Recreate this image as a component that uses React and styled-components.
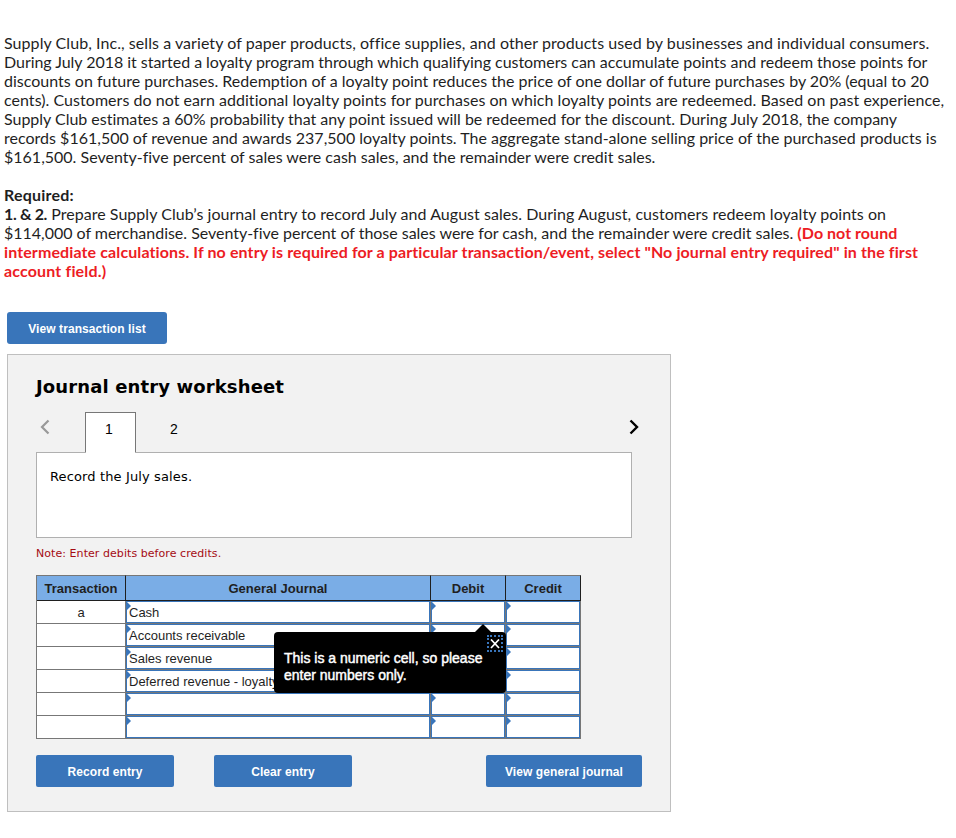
import { useState } from "react";
import styled, { createGlobalStyle } from "styled-components";

const GlobalStyle = createGlobalStyle`
  * {
    box-sizing: border-box;
  }
  body {
    margin: 0;
    background: #fff;
    color: #1f1f1f;
    font-family: "Liberation Sans", Arial, sans-serif;
  }
`;

const Page = styled.main`
  width: 956px;
  height: 838px;
  padding-top: 33px;
  overflow: hidden;
`;

const Problem = styled.section`
  padding-left: 4px;
  font-family: Lato, sans-serif;
  font-size: 16px;
  line-height: 19px;
`;

const Paragraph = styled.p`
  margin: 0 0 19px;
`;

const Line = styled.span`
  display: block;
  height: 19px;
  white-space: nowrap;
  letter-spacing: ${({ $spacing }) => $spacing || 0}px;
`;

const Strong = styled.b`
  letter-spacing: ${({ $spacing }) => $spacing || 0}px;
  color: ${({ $warn }) => ($warn ? "#ed1c24" : "inherit")};
`;

const Button = styled.button`
  width: ${({ $width }) => $width}px;
  height: 32px;
  padding: 1px 0 0;
  border: 0;
  border-radius: ${({ $radius }) => $radius || 2}px;
  background: #3975ba;
  color: #fff;
  font-family: "Liberation Sans", Arial, sans-serif;
  font-size: 12px;
  font-weight: 700;
  line-height: 16px;
  letter-spacing: 0.08px;
  cursor: pointer;
`;

const Toolbar = styled.div`
  padding: 13px 7px 10px;
  display: flex;
`;

const Panel = styled.section`
  width: 664px;
  height: 458px;
  margin-left: 7px;
  padding: 20px 28px 0;
  border: 1px solid #bfbfbf;
  background: #f2f2f2;
`;

const Title = styled.h2`
  margin: 0;
  height: 24px;
  line-height: 24px;
  font-family: "DejaVu Sans", Verdana, sans-serif;
  font-size: 18px;
  font-weight: 700;
  letter-spacing: 0.13px;
  color: #000;
`;

const Tabs = styled.div`
  display: flex;
  height: 40px;
  width: 606px;
  margin-top: 13px;
`;

const Arrow = styled.button`
  display: flex;
  width: 49px;
  height: 30px;
  padding: 7px 0 0 4px;
  border: 0;
  background: none;
  color: ${({ $muted }) => ($muted ? "#999" : "#000")};
`;

const NextArrow = styled(Arrow)`
  width: 13px;
  padding-left: 0;
  margin-left: auto;
`;

const Tab = styled.button`
  width: 51px;
  height: 40px;
  padding: 0 3px 7px 0;
  border: 1px solid ${({ $active }) => ($active ? "#777" : "transparent")};
  border-bottom: 0;
  background: ${({ $active }) => ($active ? "#fff" : "transparent")};
  color: #000;
  font-family: "Liberation Sans", Arial, sans-serif;
  font-size: 14px;
  margin-right: 14px;
`;

const Sheet = styled.div`
  position: relative;
  width: 596px;
  height: 86px;
  padding: 15px 13px;
  border: 1px solid #b0b0b0;
  background: #fff;
  font-family: "DejaVu Sans", Verdana, sans-serif;
  font-size: 13px;
  line-height: 18px;
  letter-spacing: 0.13px;
  color: #000;

  // opens the top edge below the active tab
  &::before {
    content: "";
    position: absolute;
    top: -1px;
    left: 49px;
    width: 49px;
    height: 1px;
    background: #fff;
  }
`;

const Note = styled.p`
  margin: 7px 0 14px;
  height: 16px;
  line-height: 17px;
  font-family: "DejaVu Sans", Verdana, sans-serif;
  font-size: 11px;
  letter-spacing: 0.06px;
  color: #a50b12;
`;

const Table = styled.div`
  display: grid;
  grid-template-columns: 89px 305px 75px 75px;
  width: 545px;
  border-left: 1px solid #777;
`;

const HeadCell = styled.div`
  height: 26px;
  padding-top: 1px;
  border-top: 1px solid #777;
  border-right: 1px solid #1f1f1f;
  border-bottom: 1px solid #1f1f1f;
  background: #7aade6;
  font-size: 13px;
  font-weight: 700;
  line-height: 24px;
  text-align: center;
`;

const Cell = styled.div`
  height: 23px;
  border-right: 1px solid #777;
  border-bottom: 1px solid #777;
  background: #fff;
  font-size: 13px;
  line-height: 23px;
  text-align: center;
`;

const Field = styled.div`
  position: relative;
  height: 22px;
  padding-left: 2px;
  border: 1px solid #3975ba;
  line-height: 21px;
  text-align: left;
  white-space: nowrap;
  overflow: hidden;

  &::before {
    content: "";
    position: absolute;
    left: 0;
    top: 0;
    border: solid transparent;
    border-width: 4px 0 4px 4px;
    border-left-color: #3975ba;
  }
`;

const Anchor = styled.div`
  position: relative;
`;

const Tooltip = styled.div`
  position: absolute;
  left: 238px;
  top: 57px;
  width: 232px;
  height: 61px;
  padding: 18px 10px 0;
  border-radius: 4px;
  background: #000;
  color: #fff;
  font-size: 14px;
  line-height: 17px;
  -webkit-text-stroke: 0.45px #fff;
  white-space: pre-line;

  &::before {
    content: "";
    position: absolute;
    left: 201px;
    top: -8px;
    border: solid transparent;
    border-width: 0 8px 8px;
    border-bottom-color: #000;
  }
`;

const Close = styled.button`
  position: absolute;
  top: 3px;
  left: 213px;
  display: flex;
  width: 16px;
  height: 17px;
  padding: 2px 1px;
  border: 2px dotted #3975ba;
  background: none;
  color: #fff;
`;

const Actions = styled.div`
  display: flex;
  width: 606px;
  margin-top: 16px;
  gap: 40px;

  & > :last-child {
    margin-left: auto;
  }
`;

const intro = [
  [0.064, "Supply Club, Inc., sells a variety of paper products, office supplies, and other products used by businesses and individual consumers."],
  [-0.038, "During July 2018 it started a loyalty program through which qualifying customers can accumulate points and redeem those points for"],
  [0.004, "discounts on future purchases. Redemption of a loyalty point reduces the price of one dollar of future purchases by 20% (equal to 20"],
  [0.038, "cents). Customers do not earn additional loyalty points for purchases on which loyalty points are redeemed. Based on past experience,"],
  [-0.018, "Supply Club estimates a 60% probability that any point issued will be redeemed for the discount. During July 2018, the company"],
  [0.01, "records $161,500 of revenue and awards 237,500 loyalty points. The aggregate stand-alone selling price of the purchased products is"],
  [0.003, "$161,500. Seventy-five percent of sales were cash sales, and the remainder were credit sales."],
];

const rows = [
  ["a", "Cash"],
  ["", "Accounts receivable"],
  ["", "Sales revenue"],
  ["", "Deferred revenue - loyalty"],
  ["", ""],
  ["", ""],
];

function App() {
  const [tab, setTab] = useState(1);
  const [showTip, setShowTip] = useState(true);

  return (
    <Page>
      <GlobalStyle />
      <Problem>
        <Paragraph>
          {intro.map(([spacing, text]) => (
            <Line key={text} $spacing={spacing}>
              {text}
            </Line>
          ))}
        </Paragraph>
        <Paragraph>
          <Line>
            <Strong $spacing={0.2}>Required:</Strong>
          </Line>
          <Line $spacing={0.041}>
            <Strong $spacing={-0.36}>1. & 2.</Strong> Prepare Supply Club’s
            journal entry to record July and August sales. During August,
            customers redeem loyalty points on
          </Line>
          <Line $spacing={-0.018}>
            $114,000 of merchandise. Seventy-five percent of those sales were
            for cash, and the remainder were credit sales.{" "}
            <Strong $warn $spacing={0.04}>
              (Do not round
            </Strong>
          </Line>
          <Line>
            <Strong $warn $spacing={0.112}>
              intermediate calculations. If no entry is required for a
              particular transaction/event, select "No journal entry required"
              in the first
            </Strong>
          </Line>
          <Line>
            <Strong $warn $spacing={0.16}>
              account field.)
            </Strong>
          </Line>
        </Paragraph>
      </Problem>

      <Toolbar>
        <Button $width={160} $radius={3}>
          View transaction list
        </Button>
      </Toolbar>

      <Panel>
        <Title>Journal entry worksheet</Title>
        <Tabs>
          <Arrow $muted aria-label="Previous">
            <svg width="10" height="16" viewBox="0 0 10 16">
              <path d="M8.5 1.5 2 8l6.5 6.5" fill="none" stroke="currentColor" strokeWidth="2.2" />
            </svg>
          </Arrow>
          <Tab $active={tab === 1} onClick={() => setTab(1)}>
            1
          </Tab>
          <Tab $active={tab === 2} onClick={() => setTab(2)}>
            2
          </Tab>
          <NextArrow aria-label="Next">
            <svg width="10" height="16" viewBox="0 0 10 16">
              <path d="M1.5 1.5 8 8l-6.5 6.5" fill="none" stroke="currentColor" strokeWidth="2.4" />
            </svg>
          </NextArrow>
        </Tabs>
        <Sheet>Record the July sales.</Sheet>
        <Note>Note: Enter debits before credits.</Note>

        <Anchor>
          <Table>
            <HeadCell>Transaction</HeadCell>
            <HeadCell>General Journal</HeadCell>
            <HeadCell>Debit</HeadCell>
            <HeadCell>Credit</HeadCell>
            {rows.map(([id, account], index) => [
              <Cell key={`id${index}`}>{id}</Cell>,
              <Cell key={`account${index}`}>
                <Field>{account}</Field>
              </Cell>,
              <Cell key={`debit${index}`}>
                <Field />
              </Cell>,
              <Cell key={`credit${index}`}>
                <Field />
              </Cell>,
            ])}
          </Table>
          {showTip && (
            <Tooltip>
              {"This is a numeric cell, so please\nenter numbers only."}
              <Close aria-label="Close" onClick={() => setShowTip(false)}>
                <svg width="10" height="10" viewBox="0 0 10 10">
                  <path d="M1 .5l8 8.5M9 .5L1 9" stroke="currentColor" strokeWidth="1.7" />
                </svg>
              </Close>
            </Tooltip>
          )}
        </Anchor>

        <Actions>
          <Button $width={138}>Record entry</Button>
          <Button $width={138}>Clear entry</Button>
          <Button $width={156}>View general journal</Button>
        </Actions>
      </Panel>
    </Page>
  );
}

export default App;
